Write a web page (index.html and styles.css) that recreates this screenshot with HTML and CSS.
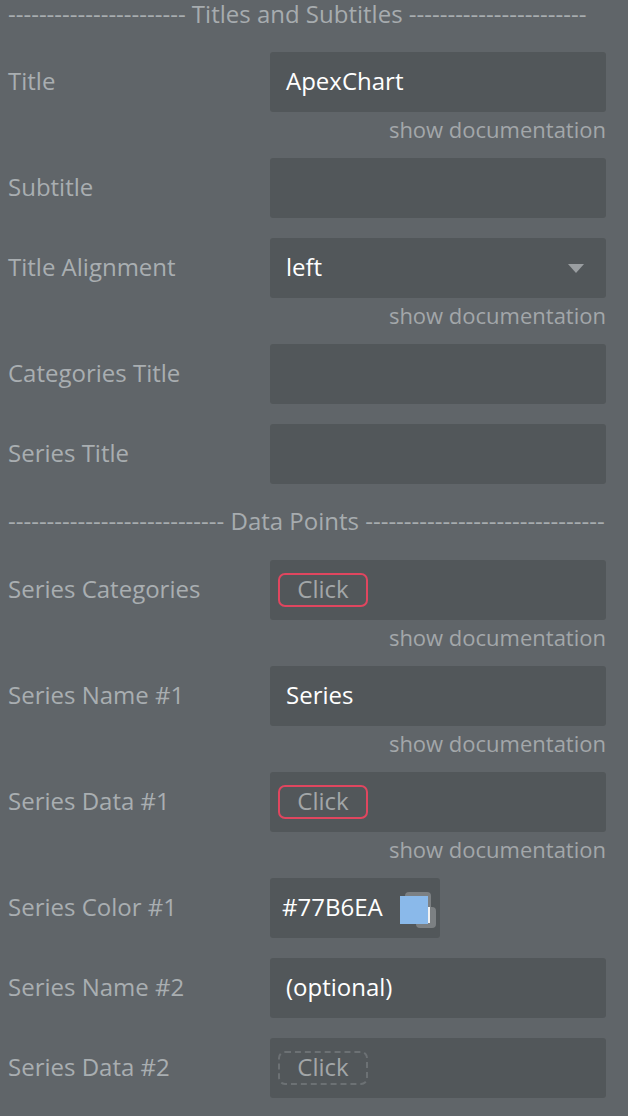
FILE: index.html
```html
<!DOCTYPE html>
<html>
<head>
<meta charset="utf-8">
<link rel="stylesheet" href="styles.css">
</head>
<body>
<div class="panel">
  <div class="section first">----------------------- Titles and Subtitles -----------------------</div>

  <div class="row">
    <div class="label">Title</div>
    <div class="input"><span class="value">ApexChart</span></div>
  </div>
  <div class="doc">show documentation</div>

  <div class="row gap">
    <div class="label">Subtitle</div>
    <div class="input"></div>
  </div>

  <div class="row gap">
    <div class="label">Title Alignment</div>
    <div class="input select"><span class="value">left</span><span class="caret"></span></div>
  </div>
  <div class="doc">show documentation</div>

  <div class="row gap">
    <div class="label">Categories Title</div>
    <div class="input"></div>
  </div>

  <div class="row gap">
    <div class="label">Series Title</div>
    <div class="input"></div>
  </div>

  <div class="section">---------------------------- Data Points -------------------------------</div>

  <div class="row">
    <div class="label">Series Categories</div>
    <div class="input pad-btn"><span class="btn">Click</span></div>
  </div>
  <div class="doc">show documentation</div>

  <div class="row gap">
    <div class="label">Series Name #1</div>
    <div class="input"><span class="value">Series</span></div>
  </div>
  <div class="doc">show documentation</div>

  <div class="row gap">
    <div class="label">Series Data #1</div>
    <div class="input pad-btn"><span class="btn">Click</span></div>
  </div>
  <div class="doc">show documentation</div>

  <div class="row gap">
    <div class="label">Series Color #1</div>
    <div class="input color">
      <span class="value">#77B6EA</span>
      <span class="swatch-wrap">
        <span class="sw-back"></span>
        <span class="sw-back2"></span>
        <span class="swatch"></span>
      </span>
    </div>
  </div>

  <div class="row gap">
    <div class="label">Series Name #2</div>
    <div class="input"><span class="value">(optional)</span></div>
  </div>

  <div class="row gap">
    <div class="label">Series Data #2</div>
    <div class="input pad-btn"><span class="btn dashed">Click</span></div>
  </div>
</div>
</body>
</html>
```
FILE: styles.css
```css
html, body {
  margin: 0;
  padding: 0;
  background: #606569;
}
body {
  font-family: "Open Sans", "Noto Sans", sans-serif;
  width: 628px;
  height: 1116px;
  overflow: hidden;
}
.panel {
  padding: 0 22px 0 8px;
  display: flex;
  flex-direction: column;
}
.section {
  color: #a7acaf;
  font-size: 24px;
  line-height: 28px;
  text-align: left;
  white-space: nowrap;
  margin: 23px 0 25px 0;
}
.section.first {
  margin-top: 0;
  line-height: 27px;
  margin-bottom: 25px;
}
.row {
  display: flex;
  align-items: center;
  height: 60px;
}
.row.gap {
  margin-top: 20px;
}
.label {
  width: 262px;
  color: #a9aeb1;
  font-size: 24px;
  line-height: 32px;
  padding-bottom: 2px;
  flex: none;
  white-space: nowrap;
}
.input {
  width: 336px;
  height: 60px;
  background: #52575a;
  border-radius: 3px;
  display: flex;
  align-items: center;
  padding: 0 16px;
  box-sizing: border-box;
  position: relative;
}
.value {
  color: #ffffff;
  font-size: 24px;
  line-height: 32px;
  padding-bottom: 2px;
}
.select {
  justify-content: space-between;
}
.caret {
  width: 0;
  height: 0;
  border-left: 8px solid transparent;
  border-right: 8px solid transparent;
  border-top: 9px solid #9a9ea1;
  margin-right: 6px;
}
.doc {
  color: #a3a7aa;
  font-size: 22px;
  line-height: 26px;
  height: 26px;
  text-align: right;
  width: 598px;
  margin-top: 4px;
  margin-bottom: -4px;
  white-space: nowrap;
}
.pad-btn {
  padding-left: 8px;
}
.btn {
  width: 90px;
  height: 34px;
  box-sizing: border-box;
  border: 2px solid #e0465f;
  border-radius: 7px;
  color: #a2a6a8;
  font-size: 24px;
  display: flex;
  align-items: center;
  justify-content: center;
  line-height: 1;
  padding-bottom: 3px;
}
.btn.dashed {
  border: 2px dashed #6c7174;
}
.color {
  width: 170px;
  padding-left: 12px;
}
.swatch-wrap {
  position: relative;
  width: 36px;
  height: 36px;
  margin-left: 17px;
  flex: none;
}
.sw-back {
  position: absolute;
  left: 5px;
  top: 2px;
  width: 26px;
  height: 25px;
  background: #7c8083;
  border-radius: 4px;
}
.sw-back2 {
  position: absolute;
  left: 16px;
  top: 17px;
  width: 20px;
  height: 21px;
  background: #7c8083;
  border-radius: 4px;
}
.sw-back2::after {
  content: "";
  position: absolute;
  left: 0;
  top: 0;
  width: 12px;
  height: 14px;
  border-right: 2px solid #f0f0f0;
  border-bottom: 2px solid #f0f0f0;
}
.swatch {
  position: absolute;
  left: 0;
  top: 6px;
  width: 28px;
  height: 28px;
  background: #8ab9ea;
}
```
